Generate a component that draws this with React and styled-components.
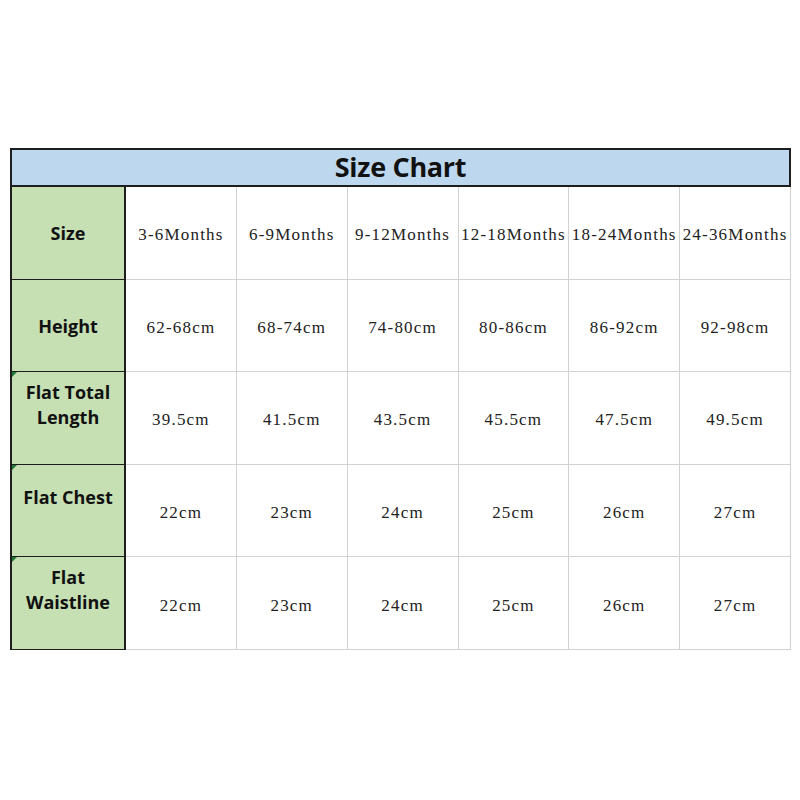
import React from "react";
import styled, { createGlobalStyle } from "styled-components";

const Global = createGlobalStyle`
  html, body { margin: 0; padding: 0; background: #fff; }
  body { width: 800px; height: 800px; overflow: hidden; }
`;

const Page = styled.div`
  padding: 148px 10px 0 10px;
  box-sizing: border-box;
  width: 800px;
`;

const Grid = styled.div`
  display: grid;
  grid-template-columns: 116px repeat(6, 1fr);
  grid-template-rows: 39px repeat(5, 92.6px);
  width: 781px;
`;

const Title = styled.div`
  grid-column: 1 / -1;
  background: #bdd7ee;
  border: 2px solid #1e1e1e;
  display: flex;
  align-items: center;
  justify-content: center;
  font-family: "Open Sans", "Liberation Sans", sans-serif;
  font-weight: 700;
  font-size: 27px;
  color: #111;
  letter-spacing: -0.3px;
  padding-bottom: 2px;
  box-sizing: border-box;
`;

const Label = styled.div`
  position: relative;
  background: #c6e0b4;
  border-left: 2px solid #1e1e1e;
  border-right: 2px solid #1e1e1e;
  border-bottom: 1.5px solid #1e1e1e;
  display: flex;
  align-items: center;
  justify-content: center;
  text-align: center;
  font-family: "Open Sans", "Liberation Sans", sans-serif;
  font-weight: 700;
  font-size: 18px;
  line-height: 25px;
  color: #111;
  padding-bottom: ${(p) => (p.$lift ? "26px" : "0")};
  padding-top: ${(p) => (p.$lift ? "0" : "2px")};
  box-sizing: border-box;
`;

const Marker = styled.span`
  position: absolute;
  top: 0;
  left: 0;
  width: 0;
  height: 0;
  border-top: 5px solid #1f7a3a;
  border-right: 5px solid transparent;
`;

const Cell = styled.div`
  border-right: 1px solid #d2d2d2;
  border-bottom: 1px solid #d2d2d2;
  display: flex;
  align-items: center;
  justify-content: center;
  font-family: "Liberation Serif", "DejaVu Serif", serif;
  font-size: 17px;
  letter-spacing: 1.2px;
  color: #222;
  white-space: nowrap;
  padding-top: 5px;
  box-sizing: border-box;
`;

const rows = [
  {
    label: ["Size"],
    values: ["3-6Months", "6-9Months", "9-12Months", "12-18Months", "18-24Months", "24-36Months"],
  },
  { label: ["Height"], values: ["62-68cm", "68-74cm", "74-80cm", "80-86cm", "86-92cm", "92-98cm"] },
  {
    label: ["Flat Total", "Length"],
    marker: true,
    lift: true,
    values: ["39.5cm", "41.5cm", "43.5cm", "45.5cm", "47.5cm", "49.5cm"],
  },
  {
    label: ["Flat Chest"],
    marker: true,
    lift: true,
    values: ["22cm", "23cm", "24cm", "25cm", "26cm", "27cm"],
  },
  {
    label: ["Flat", "Waistline"],
    marker: true,
    lift: true,
    values: ["22cm", "23cm", "24cm", "25cm", "26cm", "27cm"],
  },
];

export default function App() {
  return (
    <>
      <Global />
      <Page>
        <Grid>
          <Title>Size Chart</Title>
          {rows.map((r, i) => (
            <React.Fragment key={i}>
              <Label $lift={r.lift}>
                {r.marker && <Marker />}
                <div>
                  {r.label.map((l, j) => (
                    <div key={j}>{l}</div>
                  ))}
                </div>
              </Label>
              {r.values.map((v, j) => (
                <Cell key={j}>{v}</Cell>
              ))}
            </React.Fragment>
          ))}
        </Grid>
      </Page>
    </>
  );
}
